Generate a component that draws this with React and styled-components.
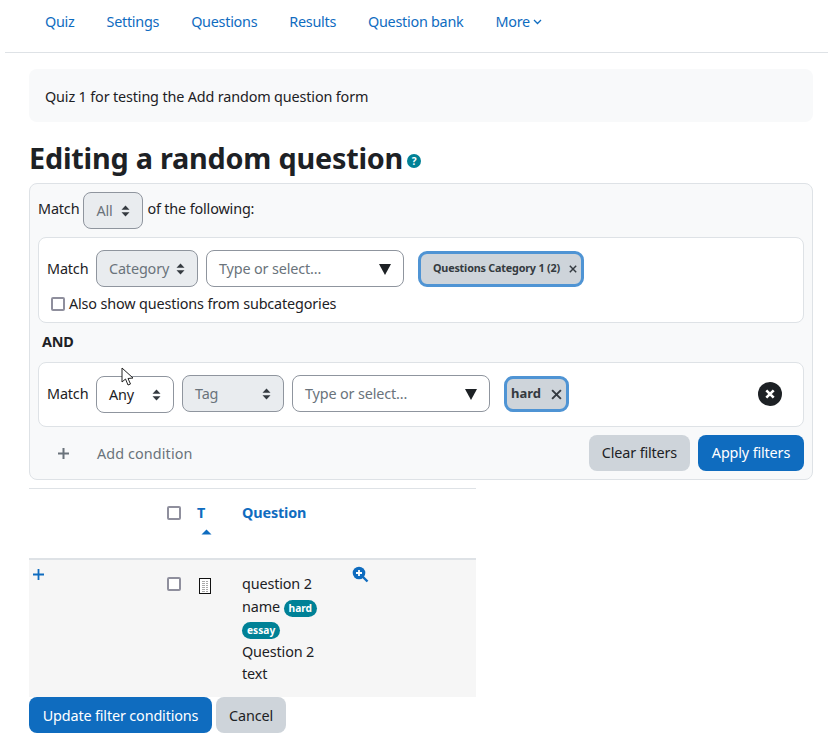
import React from "react";
import styled, { createGlobalStyle } from "styled-components";

const Global = createGlobalStyle`
  html, body { margin: 0; padding: 0; background: #fff; }
  body { font-family: "Noto Sans", "Open Sans", sans-serif; font-size: 14.4px; line-height: 1.5; color: #1d2125; letter-spacing: -0.15px; }
  * { box-sizing: border-box; }
`;

const Page = styled.div`
  position: relative;
  width: 828px;
  height: 744px;
  overflow: hidden;
`;
const Nav = styled.nav`
  margin-left: 5px;
  height: 53px;
  border-bottom: 1px solid #dee2e6;
  display: flex;
  align-items: flex-start;
  padding: 11px 0 0 40px;
  gap: 32px;
  letter-spacing: -0.27px;
`;
const NavLink = styled.a`
  color: #0f6cbf;
  display: inline-flex;
  align-items: center;
  gap: 3px;
`;
const Main = styled.main`
  padding: 16px 15px 0 29px;
`;
const Notice = styled.div`
  height: 53px;
  background: #f8f9fa;
  border-radius: 8px;
  padding: 17px 16px 0;
  line-height: 22px;
`;
const Heading = styled.h2`
  margin: 0;
  height: 61px;
  padding-top: 16px;
  font-size: 28.8px;
  line-height: 40px;
  font-weight: 700;
  letter-spacing: -0.22px;
  display: flex;
  align-items: flex-start;
`;
const HelpDot = styled.span`
  width: 14px;
  height: 14px;
  margin: 16px 0 0 4px;
  border-radius: 50%;
  background: #008196;
  color: #fff;
  font-size: 10px;
  line-height: 14px;
  font-weight: 700;
  text-align: center;
  letter-spacing: 0;
`;
const FilterBox = styled.section`
  height: 297px;
  border: 1px solid #dee2e6;
  border-radius: 8px;
  background: #f8f9fa;
  padding: 8px;
`;
const TopRow = styled.div`
  display: flex;
  align-items: center;
  gap: 4px;
  height: 37px;
`;
const TopText = styled.span`
  padding-bottom: 4px;
`;
const Card = styled.div`
  background: #fff;
  border: 1px solid #dee2e6;
  border-radius: 8px;
  padding: ${(p) => p.$pad};
  height: ${(p) => p.$h}px;
  margin-top: ${(p) => p.$mt}px;
`;
const CondRow = styled.div`
  display: flex;
  align-items: center;
  gap: 8px;
`;
const Label = styled.span`
  margin-right: -4px;
  width: 45px;
  flex: none;
`;
const SelectBox = styled.div`
  width: ${(p) => p.$w}px;
  height: 37px;
  flex: none;
  border: 1px solid #8f959e;
  border-radius: 8px;
  background: ${(p) => (p.$disabled ? "#e9ecef" : "#fff")};
  color: ${(p) => (p.$disabled ? "#6a737b" : "#1d2125")};
  padding: 0 12px;
  display: flex;
  align-items: center;
  justify-content: space-between;
  position: relative;
  top: ${(p) => p.$shift || 0}px;
`;
const AutoBox = styled.div`
  width: 198px;
  height: 37px;
  flex: none;
  border: 1px solid #8f959e;
  border-radius: 8px;
  background: #fff;
  color: #6a737b;
  padding: 0 12px;
  display: flex;
  align-items: center;
  justify-content: space-between;
`;
const Chip = styled.div`
  margin-left: 6px;
  height: 36px;
  flex: none;
  border: 3px solid #4f94d4;
  border-radius: 9px;
  background: #ced4da;
  color: #343a40;
  font-weight: 700;
  white-space: nowrap;
  font-size: ${(p) => p.$fs}px;
  padding: ${(p) => p.$pad};
  display: flex;
  align-items: center;
  justify-content: space-between;
  width: ${(p) => p.$w}px;
  letter-spacing: ${(p) => p.$ls};
`;
const CheckRow = styled.label`
  display: flex;
  align-items: center;
  gap: 4px;
  margin: 6px 0 0 4px;
  height: 22px;
`;
const CheckBox = styled.span`
  display: block;
  width: 14px;
  height: 14px;
  flex: none;
  border: 2px solid #8f8f9d;
  border-radius: 2px;
  background: #fff;
`;
const AndLabel = styled.div`
  font-weight: 700;
  margin: 8px 0 0 4px;
  height: 23px;
  line-height: 22px;
`;
const RemoveBtn = styled.span`
  margin-left: auto;
  margin-right: 13px;
  display: flex;
`;
const Footer = styled.div`
  display: flex;
  align-items: center;
  margin-top: 8px;
`;
const AddIcon = styled.span`
  display: flex;
  margin: 0 27px 0 19px;
`;
const AddText = styled.span`
  color: #6a737b;
  letter-spacing: 0.1px;
  padding-top: 1px;
`;
const Button = styled.button`
  font: inherit;
  letter-spacing: inherit;
  height: 36px;
  border: 0;
  border-radius: 8px;
  padding: ${(p) => p.$pt || 0}px 0 0;
  width: ${(p) => p.$w}px;
  margin-left: ${(p) => p.$ml || 0};
  background: ${(p) => (p.$primary ? "#0f6cbf" : "#ced4da")};
  color: ${(p) => (p.$primary ? "#fff" : "#1d2125")};
`;
const QTable = styled.div`
  width: 447px;
  margin-top: 8px;
  border-top: 1px solid #dee2e6;
`;
const HeadRow = styled.div`
  display: grid;
  grid-template-columns: 138px 30px 45px 110px 1fr;
  height: 71px;
  border-bottom: 2px solid #dee2e6;
  padding-top: 13px;
  color: #0f6cbf;
  font-weight: 700;
`;
const BodyRow = styled.div`
  display: grid;
  grid-template-columns: 138px 30px 45px 110px 1fr;
  height: 137px;
  background: #f6f6f6;
`;
const Cell = styled.div`
  padding-top: ${(p) => p.$pt || 0}px;
  padding-left: ${(p) => p.$pl || 0}px;
`;
const SortArrow = styled.div`
  margin: 5px 0 0 4px;
  display: flex;
`;
const QText = styled.div`
  padding-top: 13px;
  line-height: 22.5px;
`;
const Badge = styled.span`
  display: inline-block;
  background: #008196;
  color: #fff;
  font-size: 10.2px;
  line-height: 16px;
  height: 17px;
  border-radius: 9px;
  font-weight: 700;
  padding: 0 5px;
  vertical-align: 0;
  letter-spacing: 0;
`;
const Actions = styled.div`
  display: flex;
  gap: 4px;
`;
const Cursor = styled.svg`
  position: absolute;
  left: 121px;
  top: 367px;
`;

const Spinner = () => (
  <svg width="9" height="12" viewBox="0 0 9 12">
    <path d="M4.5 0.5 L8.5 4.8 H0.5 Z M4.5 11.5 L0.5 7.2 H8.5 Z" fill="#343a40" />
  </svg>
);
const Down = () => (
  <svg width="12" height="12" viewBox="0 0 12 12">
    <path d="M0 1 H12 L6 12 Z" fill="#1d2125" />
  </svg>
);
const Times = ({ s = 9, c = "#343a40", w = 1.8 }) => (
  <svg width={s} height={s} viewBox="0 0 10 10">
    <path d="M1 1 L9 9 M9 1 L1 9" stroke={c} strokeWidth={w} fill="none" />
  </svg>
);
const Chev = () => (
  <svg width="9" height="6" viewBox="0 0 9 6">
    <path d="M1 1 L4.5 4.5 L8 1" stroke="#0f6cbf" strokeWidth="1.3" fill="none" />
  </svg>
);

export default function App() {
  return (
    <Page>
      <Global />
      <Nav>
        <NavLink>Quiz</NavLink>
        <NavLink>Settings</NavLink>
        <NavLink>Questions</NavLink>
        <NavLink>Results</NavLink>
        <NavLink>Question bank</NavLink>
        <NavLink>More <Chev /></NavLink>
      </Nav>
      <Main>
        <Notice>Quiz 1 for testing the Add random question form</Notice>
        <Heading>Editing a random question<HelpDot>?</HelpDot></Heading>
        <FilterBox>
          <TopRow>
            <TopText>Match</TopText>
            <SelectBox $w={60} $disabled>All <Spinner /></SelectBox>
            <TopText>of the following:</TopText>
          </TopRow>
          <Card $mt={8} $h={86} $pad="12px 8px">
            <CondRow>
              <Label>Match</Label>
              <SelectBox $w={102} $disabled>Category <Spinner /></SelectBox>
              <AutoBox>Type or select... <Down /></AutoBox>
              <Chip $w={166} $fs={10.8} $pad="0 4px 0 12px" $ls="-0.2px">Questions Category 1 (2) <Times s={8} /></Chip>
            </CondRow>
            <CheckRow><CheckBox />Also show questions from subcategories</CheckRow>
          </Card>
          <AndLabel>AND</AndLabel>
          <Card $mt={8} $h={65} $pad="12px 8px">
            <CondRow>
              <Label>Match</Label>
              <SelectBox $w={78} $shift={1}>Any <Spinner /></SelectBox>
              <SelectBox $w={102} $disabled>Tag <Spinner /></SelectBox>
              <AutoBox>Type or select... <Down /></AutoBox>
              <Chip $w={65} $fs={13} $pad="1px 4px 0 4px" $ls="0">hard <Times s={11} /></Chip>
              <RemoveBtn>
                <svg width="24" height="24" viewBox="0 0 24 24">
                  <circle cx="12" cy="12" r="12" fill="#1d2125" />
                  <path d="M8.3 8.3 L15.7 15.7 M15.7 8.3 L8.3 15.7" stroke="#fff" strokeWidth="2.6" />
                </svg>
              </RemoveBtn>
            </CondRow>
          </Card>
          <Footer>
            <AddIcon>
              <svg width="13" height="13" viewBox="0 0 13 13">
                <path d="M6.5 1 V12 M1 6.5 H12" stroke="#6a737b" strokeWidth="2" />
              </svg>
            </AddIcon>
            <AddText>Add condition</AddText>
            <Button $w={101} $ml="auto">Clear filters</Button>
            <Button $w={106} $ml="8px" $primary>Apply filters</Button>
          </Footer>
        </FilterBox>
        <QTable>
          <HeadRow>
            <span />
            <Cell $pt={4}><CheckBox /></Cell>
            <div>
              <span>T</span>
              <SortArrow>
                <svg width="11" height="6" viewBox="0 0 11 6"><path d="M5.5 0.5 L10.5 5.5 H0.5 Z" fill="#0f6cbf" /></svg>
              </SortArrow>
            </div>
            <span>Question</span>
            <span />
          </HeadRow>
          <BodyRow>
            <Cell $pt={5} $pl={3}>
              <svg width="13" height="13" viewBox="0 0 13 13"><path d="M6.5 1 V12 M1 6.5 H12" stroke="#0f6cbf" strokeWidth="1.8" /></svg>
            </Cell>
            <Cell $pt={17}><CheckBox /></Cell>
            <Cell $pt={18} $pl={2}>
              <svg width="12" height="16" viewBox="0 0 12 16">
                <rect x="0.5" y="0.5" width="11" height="15" fill="#fff" stroke="#111" />
                <path d="M3 3.5H9M3 5.5H9M3 7.5H9M3 9.5H9M3 11.5H9M3 13.5H9" stroke="#aaa" strokeDasharray="3 1" />
              </svg>
            </Cell>
            <QText>question 2<br />name <Badge>hard</Badge><br /><Badge>essay</Badge><br />Question 2<br />text</QText>
            <Cell $pt={6}>
              <svg width="17" height="17" viewBox="0 0 17 17">
                <circle cx="7" cy="7" r="6.3" fill="#0f6cbf" />
                <path d="M4 7H10M7 4V10" stroke="#fff" strokeWidth="1.8" />
                <path d="M11 11L15.5 15.5" stroke="#0f6cbf" strokeWidth="2.4" />
              </svg>
            </Cell>
          </BodyRow>
        </QTable>
        <Actions>
          <Button $w={183} $pt={1} $primary>Update filter conditions</Button>
          <Button $w={70} $pt={1}>Cancel</Button>
        </Actions>
      </Main>
      <Cursor width="14" height="20" viewBox="0 0 14 20">
        <path d="M1 1 L1 15 L4.5 12 L7 18 L9.5 17 L7 11.5 L12 11 Z" fill="#fff" stroke="#222" strokeWidth="1" />
      </Cursor>
    </Page>
  );
}
